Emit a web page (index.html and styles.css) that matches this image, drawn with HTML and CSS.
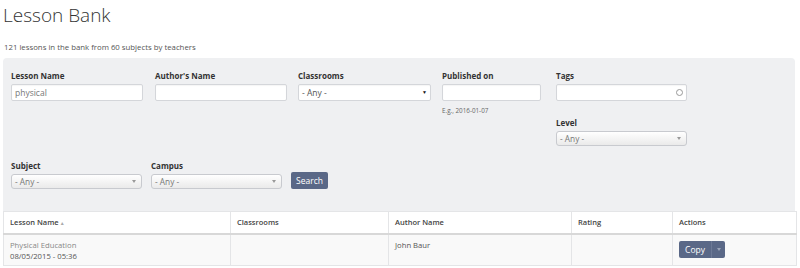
FILE: index.html
```html
<!DOCTYPE html>
<html lang="en">
<head>
  <meta charset="UTF-8" />
  <title>Lesson Bank</title>
  <link rel="stylesheet" href="styles.css">
</head>
<body>
  <div class="page">
    <h1 class="title">Lesson Bank</h1>
    <p class="summary">121 lessons in the bank from 60 subjects by teachers</p>

    <!-- Filters -->
    <form class="filters" onsubmit="return false">
      <div class="filter-row">
        <div class="field w-132 gap-12">
          <label>Lesson Name</label>
          <div class="input">physical</div>
        </div>
        <div class="field w-132">
          <label>Author's Name</label>
          <div class="input"></div>
        </div>
        <div class="field w-133">
          <label>Classrooms</label>
          <div class="input plain-select">- Any -<span class="caret-dark">▼</span></div>
        </div>
        <div class="field w-99 gap-15">
          <label>Published on</label>
          <div class="input"></div>
          <div class="help">E.g., 2016-01-07</div>
        </div>
        <div class="field w-131">
          <label>Tags</label>
          <div class="input tags"><span class="spinner"></span></div>
          <label class="level-label">Level</label>
          <div class="select">- Any -<span class="caret"></span></div>
        </div>
      </div>

      <div class="filter-row row-two">
        <div class="field w-131">
          <label>Subject</label>
          <div class="select">- Any -<span class="caret"></span></div>
        </div>
        <div class="field w-131">
          <label>Campus</label>
          <div class="select">- Any -<span class="caret"></span></div>
        </div>
        <button class="btn search">Search</button>
      </div>
    </form>

    <!-- Results -->
    <table class="results">
      <thead>
        <tr>
          <th class="c-name">Lesson Name<span class="sort">▲</span></th>
          <th class="c-class">Classrooms</th>
          <th class="c-author">Author Name</th>
          <th class="c-rating">Rating</th>
          <th>Actions</th>
        </tr>
      </thead>
      <tbody>
        <tr>
          <td><span class="lesson">Physical Education</span><br>08/05/2015 - 05:36</td>
          <td></td>
          <td class="muted">John Baur</td>
          <td></td>
          <td>
            <div class="split">
              <span class="split-main">Copy</span><span class="split-toggle"><span class="caret light"></span></span>
            </div>
          </td>
        </tr>
      </tbody>
    </table>
  </div>
</body>
</html>
```

FILE: styles.css
```css
* { margin: 0; padding: 0; box-sizing: border-box; }
html, body {
  width: 100%;
  height: 100%;
  background: #fff;
  font-family: "Open Sans", sans-serif;
  color: #333;
  overflow: hidden;
}
.page { padding: 0 3px; }

.title {
  margin-top: 2px;
  font-size: 19px;
  font-weight: 300;
  line-height: 26px;
  color: #333;
}
.summary {
  margin: 14px 0 5px 1px;
  font-size: 7.8px;
  line-height: 11px;
  color: #555;
}

/* Filter panel */
.filters {
  width: 792px;
  background: #eff0f2;
  border-radius: 4px 4px 0 0;
  padding: 13px 8px 22px;
}
.filter-row { display: flex; align-items: flex-start; }
.filter-row .field { margin-right: 11px; }
.filter-row .gap-12 { margin-right: 12px; }
.filter-row .gap-15 { margin-right: 15px; }
.row-two { margin-top: 15px; align-items: flex-end; }
.row-two .field { margin-right: 9px; }

.field label {
  display: block;
  font-size: 8px;
  font-weight: 700;
  line-height: 10px;
  margin-bottom: 3px;
  color: #333;
}
.w-132 { width: 132px; }
.w-133 { width: 133px; }
.w-99 { width: 99px; }
.w-131 { width: 131px; }

.input {
  position: relative;
  height: 17px;
  background: #fff;
  border: 1px solid #d4d6da;
  border-radius: 2px;
  box-shadow: inset 0 1px 1px rgba(0, 0, 0, 0.04);
  font-size: 8.5px;
  line-height: 15px;
  padding: 0 3px;
  color: #777;
}
.plain-select { color: #555; }
.caret-dark {
  position: absolute;
  right: 3px;
  top: 0;
  font-size: 5px;
  color: #111;
}
.tags .spinner {
  position: absolute;
  right: 3px;
  top: 4px;
  width: 7px;
  height: 7px;
  border: 1px solid #999;
  border-radius: 50%;
}
.help {
  margin-top: 6px;
  font-size: 6.3px;
  line-height: 8px;
  color: #666;
}
.level-label { margin-top: 17px; }

.select {
  position: relative;
  height: 15px;
  background: linear-gradient(#fff, #eaeaea);
  border: 1px solid #c8cacf;
  border-radius: 3px;
  font-size: 8.3px;
  line-height: 13px;
  padding: 0 3px;
  color: #777;
}
.caret {
  position: absolute;
  right: 5px;
  top: 5px;
  width: 0;
  height: 0;
  border-left: 2.5px solid transparent;
  border-right: 2.5px solid transparent;
  border-top: 3px solid #999;
}
.caret.light { position: static; display: inline-block; border-top-color: #9aa4b8; vertical-align: middle; }

.btn {
  height: 17px;
  width: 37px;
  border: none;
  border-radius: 2px;
  background: #5a6887;
  color: #fff;
  font-family: "Open Sans", sans-serif;
  font-size: 8.5px;
}

/* Results table */
.results {
  width: 794px;
  border-collapse: collapse;
  font-size: 7.7px;
}
.results th, .results td {
  border: 1px solid #e4e5e7;
  text-align: left;
  vertical-align: top;
  padding: 0 6px;
}
.results th {
  height: 22px;
  vertical-align: middle;
  font-weight: 600;
  font-size: 7.5px;
  color: #444;
  background: #fff;
  border-bottom: 2px solid #d8d8d8;
}
.results td {
  background: #f9f9f9;
  height: 32px;
  line-height: 11px;
  padding-top: 5px;
  color: #555;
}
.c-name { width: 227px; }
.c-class { width: 158px; }
.c-author { width: 183px; }
.c-rating { width: 101px; }
.sort { font-size: 5px; color: #aaa; margin-left: 1px; }
.lesson, .muted { color: #888; }

.split {
  display: inline-flex;
  height: 17px;
  margin-top: 1px;
  border-radius: 2px;
  overflow: hidden;
  background: #5a6887;
  color: #fff;
  font-size: 8.5px;
  line-height: 17px;
}
.split-main { width: 32px; text-align: center; }
.split-toggle {
  width: 14px;
  text-align: center;
  border-left: 1px solid #6c7996;
  line-height: 15px;
}
```
